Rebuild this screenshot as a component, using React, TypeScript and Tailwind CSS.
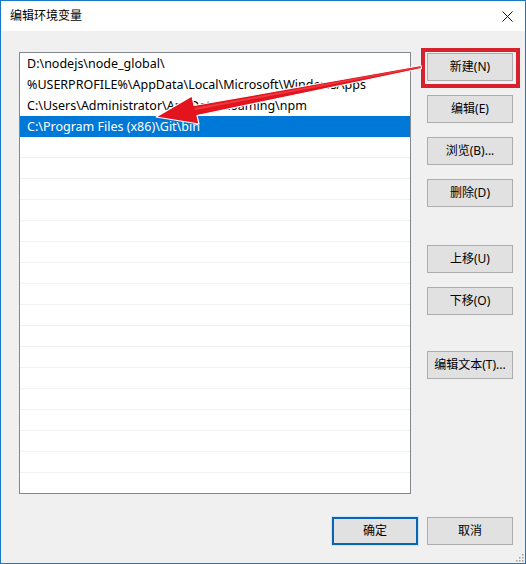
const items = [
  'D:\\nodejs\\node_global\\',
  '%USERPROFILE%\\AppData\\Local\\Microsoft\\WindowsApps',
  'C:\\Users\\Administrator\\AppData\\Roaming\\npm',
  'C:\\Program Files (x86)\\Git\\bin',
];

const SELECTED = 3;
const ROWS = 21;

const cjk = '[font-family:"Segoe_UI","Noto_Sans","Noto_Sans_CJK_SC",sans-serif]';

function Btn({ label, className = '', focused = false }: { label: string; className?: string; focused?: boolean }) {
  return (
    <button
      className={`flex h-[28px] w-[86px] items-center justify-center bg-[#e1e1e1] text-[12px] text-black ${cjk} ${
        focused ? 'border-2 border-[#0a64b4] shadow-[0_0_0_1px_#cce4f7]' : 'border border-[#adadad]'
      } ${className}`}
    >
      {label}
    </button>
  );
}

function Arrow() {
  // tip at (155,116), tail near the 新建 button
  return (
    <svg className="pointer-events-none absolute left-0 top-0" width="526" height="564" viewBox="0 0 526 564">
      <polygon
        points="420,64.5 420.5,67.5 196,114.5 198,123 155,116 191,95 193,104.5"
        fill="#e3141d"
        stroke="#ffffff"
        strokeWidth="1.2"
        strokeLinejoin="round"
      />
      <polygon points="420,65.5 420.2,66.5 194,109 193.5,107" fill="#f4545a" opacity="0.6" />
    </svg>
  );
}

export default function App() {
  return (
    <div className="relative h-[564px] w-[526px] overflow-hidden border border-[#1a78c9] bg-[#f0f0f0]">
      {/* title bar */}
      <div className="flex h-[30px] items-center justify-between bg-white pl-[9px] pr-[10px]">
        <span className={`text-[12px] text-black ${cjk}`}>编辑环境变量</span>
        <svg width="11" height="11" viewBox="0 0 11 11" className="mr-[2px]">
          <path d="M0.5 0.5 L10.5 10.5 M10.5 0.5 L0.5 10.5" stroke="#111" strokeWidth="1" />
        </svg>
      </div>

      <div className="pl-[18px] pt-[21px]">
        <div className="flex gap-[16px]">
          {/* list */}
          <div className="h-[442px] w-[392px] overflow-hidden border border-[#828790] bg-white">
            {Array.from({ length: ROWS }).map((_, i) => {
              const text = items[i];
              const sel = i === SELECTED;
              return (
                <div
                  key={i}
                  className={`h-[21px] whitespace-nowrap pl-[7px] text-[12.5px] leading-[21px] ${cjk} ${
                    sel ? 'bg-[#0078d7] text-white' : 'text-black'
                  } ${text === undefined ? 'border-b border-[#f1f1f1]' : ''}`}
                >
                  {text}
                </div>
              );
            })}
          </div>

          {/* side buttons */}
          <div className="flex flex-col pt-px">
            <Btn label="新建(N)" />
            <Btn label="编辑(E)" className="mt-[14px]" />
            <Btn label="浏览(B)..." className="mt-[14px]" />
            <Btn label="删除(D)" className="mt-[14px]" />
            <Btn label="上移(U)" className="mt-[38px]" />
            <Btn label="下移(O)" className="mt-[14px]" />
            <Btn label="编辑文本(T)..." className="mt-[36px]" />
          </div>
        </div>

        <div className="mt-[23px] flex justify-end gap-[9px] pr-[12px]">
          <Btn label="确定" focused />
          <Btn label="取消" />
        </div>
      </div>

      {/* resize grip */}
      <svg className="absolute bottom-[1px] right-[1px]" width="10" height="10" viewBox="0 0 10 10">
        {[
          [8, 2],
          [5, 5],
          [8, 5],
          [2, 8],
          [5, 8],
          [8, 8],
        ].map(([x, y], i) => (
          <rect key={i} x={x} y={y} width="1.5" height="1.5" fill="#a0a0a0" />
        ))}
      </svg>

      {/* annotation */}
      <div className="pointer-events-none absolute left-[420px] top-[47px] h-[40px] w-[99px] border-[4px] border-[#d6222c]" />
      <Arrow />
    </div>
  );
}
